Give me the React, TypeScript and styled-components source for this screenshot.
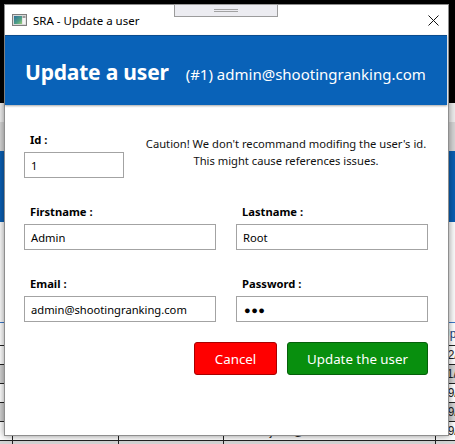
import React from "react";
import styled, { createGlobalStyle } from "styled-components";

const FONT = `"Noto Sans", "Open Sans", sans-serif`;

const GlobalStyle = createGlobalStyle`
  html, body { margin: 0; padding: 0; background: #000; }
  body { font-family: ${FONT}; overflow: hidden; }
  * { box-sizing: border-box; }
`;

const Desktop = styled.div`
  position: relative;
  width: 455px;
  height: 444px;
  overflow: hidden;
  background: #000;
`;

/* ---------- background application (behind the dialog) ---------- */
const BackApp = styled.div`
  display: flex;
  flex-direction: column;
  width: 455px;
  height: 444px;
`;

const Band = styled.div<{ $h: number; $bg: string }>`
  flex: none;
  height: ${(p) => p.$h}px;
  background: ${(p) => p.$bg};
`;

const Table = styled.div`
  flex: none;
  display: flex;
  flex-direction: column;
  background: #fff;
  border-top: 1px solid #3c78c8;
  font-family: "Liberation Sans", sans-serif;
  font-size: 12px;
`;

const TRow = styled.div<{ $alt?: boolean; $head?: boolean }>`
  display: grid;
  grid-template-columns: 12px 106px 105px 212px 1fr;
  height: ${(p) => (p.$head ? 23 : 19)}px;
  background: ${(p) => (p.$alt ? "#d4d4d4" : "#fff")};
  border-bottom: 1px solid #222;
  color: ${(p) => (p.$head ? "#1b3f80" : "#222")};
`;

const TCell = styled.div`
  border-left: 1px solid #222;
  padding-left: 5px;
  display: flex;
  align-items: center;
  white-space: nowrap;
  overflow: hidden;
  &:first-child { border-left: none; }
`;

/* ---------- dialog ---------- */
const Dialog = styled.div`
  position: absolute;
  left: 4px;
  top: 4px;
  width: 445px;
  height: 432px;
  background: #fff;
  border: 1px solid #8e8e8e;
  box-shadow: 0 0 7px rgba(0, 0, 0, 0.45);
  display: flex;
  flex-direction: column;
`;

const TitleBar = styled.div`
  flex: none;
  height: 30px;
  display: flex;
  align-items: center;
  padding: 0 9px 0 7px;
`;

const TitleText = styled.span`
  margin-left: 6px;
  font-size: 11.5px;
  color: #000;
  flex: 1;
`;

const Header = styled.div`
  flex: none;
  height: 70px;
  margin-right: 1px;
  background: #0962b8;
  border-top: 1px solid #0a4c8e;
  box-shadow: 0 1px 2px rgba(0, 0, 0, 0.35);
  display: flex;
  align-items: baseline;
  padding: 22px 0 0 20px;
  color: #fff;
`;

const HeaderTitle = styled.span`
  font-size: 21px;
  font-weight: 700;
  letter-spacing: -0.2px;
`;

const HeaderSub = styled.span`
  margin-left: 17px;
  font-size: 15px;
`;

const Body = styled.div`
  flex: 1;
  display: flex;
  flex-direction: column;
  padding: 27px 20px 0 19px;
`;

const Row = styled.div<{ $top?: number; $cols: string }>`
  display: grid;
  grid-template-columns: ${(p) => p.$cols};
  column-gap: 20px;
  margin-top: ${(p) => p.$top ?? 0}px;
`;

const Field = styled.div`
  display: flex;
  flex-direction: column;
  gap: 4px;
`;

const Label = styled.label`
  font-size: 11.2px;
  font-weight: 700;
  line-height: 16px;
  padding-left: 6px;
  color: #000;
`;

const Input = styled.div<{ $w?: number }>`
  height: 26px;
  width: ${(p) => (p.$w ? `${p.$w}px` : "100%")};
  border: 1px solid #a3a3a3;
  display: flex;
  align-items: center;
  padding-left: 6px;
  font-size: 11.2px;
  color: #000;
  background: #fff;
`;

const Dots = styled.span`
  font-size: 11px;
  letter-spacing: 0.5px;
  padding-left: 1px;
`;

const Caution = styled.p`
  margin: 3px 0 0 0;
  font-size: 11.2px;
  line-height: 17px;
  text-align: center;
  white-space: nowrap;
  color: #111;
`;

const Actions = styled.div`
  display: flex;
  justify-content: flex-end;
  gap: 10px;
  margin-top: 20px;
`;

const Button = styled.button<{ $variant: "danger" | "success"; $w: number }>`
  width: ${(p) => p.$w}px;
  height: 33px;
  border-radius: 3px;
  border: 1px solid ${(p) => (p.$variant === "danger" ? "#a80000" : "#05600a")};
  background: ${(p) => (p.$variant === "danger" ? "#ff0000" : "#088f0e")};
  color: #fff;
  font-family: ${FONT};
  font-size: 13.3px;
  padding: 0;
  cursor: pointer;
`;

const Handle = styled.div`
  position: absolute;
  left: 174px;
  top: 4px;
  width: 104px;
  height: 13px;
  background: #ececf1;
  border: 1px solid #9c9c9c;
  display: flex;
  flex-direction: column;
  align-items: center;
  justify-content: center;
  gap: 1px;
`;

const HandleLine = styled.div`
  width: 24px;
  height: 1px;
  background: #a2a2a2;
`;

const AppIcon = () => (
  <svg width="15" height="12" viewBox="0 0 15 12">
    <defs>
      <linearGradient id="ic" x1="0" y1="0" x2="1" y2="1">
        <stop offset="0" stopColor="#2d6f9a" />
        <stop offset="0.6" stopColor="#4e9f86" />
        <stop offset="1" stopColor="#9ccf7a" />
      </linearGradient>
    </defs>
    <rect x="0.5" y="0.5" width="14" height="11" fill="#d8d8d8" stroke="#7d7d7d" />
    <rect x="2" y="2" width="8" height="8" fill="url(#ic)" />
    <rect x="10.5" y="2" width="3" height="8" fill="#f4f4f4" />
    <rect x="10.5" y="2" width="3" height="2" fill="#9a9a9a" />
  </svg>
);

const CloseIcon = () => (
  <svg width="11" height="11" viewBox="0 0 11 11">
    <path d="M0.5 0.5 L10.5 10.5 M10.5 0.5 L0.5 10.5" stroke="#111" strokeWidth="1" fill="none" />
  </svg>
);

const rows = [
  { c: ["", "", "", "", "12/03/1990"], alt: false },
  { c: ["", "", "", "", "11/07/1985"], alt: true },
  { c: ["", "", "", "", "09/02/1979"], alt: false },
  { c: ["", "", "", "", "09/11/1993"], alt: true },
  { c: ["", "Morant", "Jean", "morant.jean@hotmail.com", "09/05/1988"], alt: false },
  { c: ["", "", "", "", ""], alt: true },
];

export default function App() {
  return (
    <>
      <GlobalStyle />
      <Desktop>
        <BackApp>
          <Band $h={103} $bg="#000" />
          <Band $h={19} $bg="#eeeeee" />
          <Band $h={29} $bg="#d6d6d6" />
          <Band $h={71} $bg="#0a5fb3" />
          <Band $h={100} $bg="#fbfbfb" />
          <Table>
            <TRow $head>
              <TCell />
              <TCell />
              <TCell />
              <TCell />
              <TCell>Updated</TCell>
            </TRow>
            {rows.map((r, i) => (
              <TRow key={i} $alt={r.alt}>
                {r.c.map((t, j) => (
                  <TCell key={j}>{t}</TCell>
                ))}
              </TRow>
            ))}
          </Table>
        </BackApp>

        <Dialog>
          <TitleBar>
            <AppIcon />
            <TitleText>SRA - Update a user</TitleText>
            <CloseIcon />
          </TitleBar>
          <Header>
            <HeaderTitle>Update a user</HeaderTitle>
            <HeaderSub>(#1) admin@shootingranking.com</HeaderSub>
          </Header>
          <Body>
            <Row $cols="100px 1fr">
              <Field>
                <Label>Id :</Label>
                <Input $w={100}>1</Input>
              </Field>
              <Caution>
                Caution! We don't recommand modifing the user's id.
                <br />
                This might cause references issues.
              </Caution>
            </Row>
            <Row $cols="1fr 1fr" $top={26}>
              <Field>
                <Label>Firstname :</Label>
                <Input>Admin</Input>
              </Field>
              <Field>
                <Label>Lastname :</Label>
                <Input>Root</Input>
              </Field>
            </Row>
            <Row $cols="1fr 1fr" $top={26}>
              <Field>
                <Label>Email :</Label>
                <Input>admin@shootingranking.com</Input>
              </Field>
              <Field>
                <Label>Password :</Label>
                <Input>
                  <Dots>●●●</Dots>
                </Input>
              </Field>
            </Row>
            <Actions>
              <Button $variant="danger" $w={83}>Cancel</Button>
              <Button $variant="success" $w={141}>Update the user</Button>
            </Actions>
          </Body>
        </Dialog>

        <Handle>
          <HandleLine />
          <HandleLine />
        </Handle>
      </Desktop>
    </>
  );
}
